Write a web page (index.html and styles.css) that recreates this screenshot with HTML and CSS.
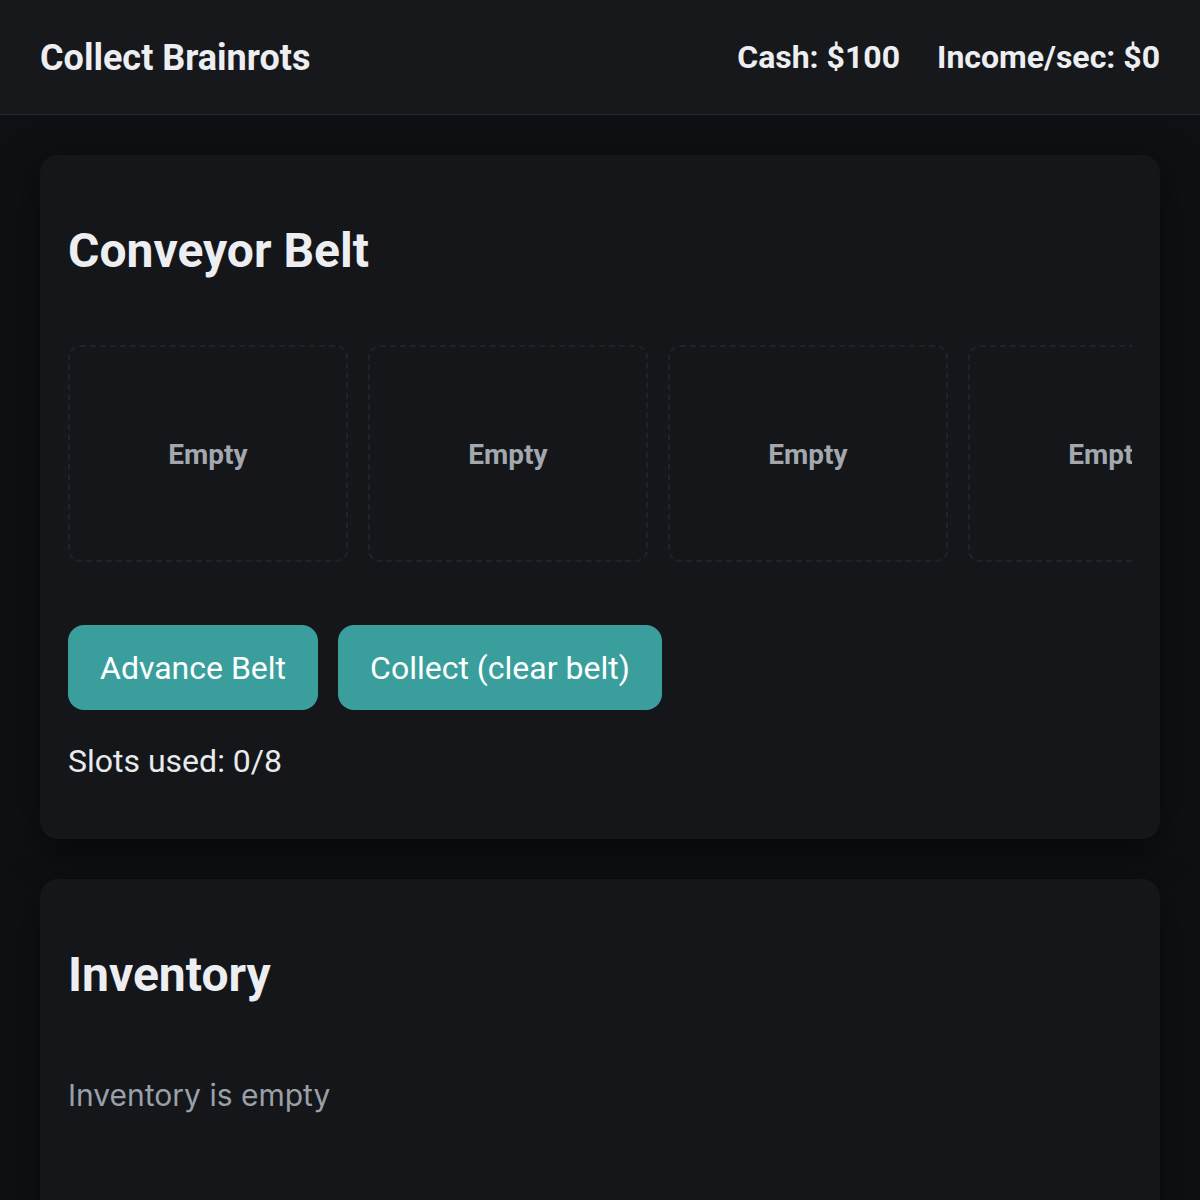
FILE: index.html
```html
<!DOCTYPE html>
<html lang="en">
<head>
<meta charset="utf-8">
<title>Collect Brainrots</title>
<link rel="stylesheet" href="styles.css">
</head>
<body>
<header class="topbar">
  <div class="brand">Collect Brainrots</div>
  <div class="stats">
    <span class="stat">Cash: $100</span>
    <span class="stat">Income/sec: $0</span>
  </div>
</header>
<main class="main">
  <section class="card">
    <h2 class="card-title">Conveyor Belt</h2>
    <div class="belt">
      <div class="slot">Empty</div>
      <div class="slot">Empty</div>
      <div class="slot">Empty</div>
      <div class="slot">Empty</div>
      <div class="slot">Empty</div>
      <div class="slot">Empty</div>
      <div class="slot">Empty</div>
      <div class="slot">Empty</div>
    </div>
    <div class="actions">
      <button class="btn">Advance Belt</button>
      <button class="btn">Collect (clear belt)</button>
    </div>
    <p class="slots-info">Slots used: 0/8</p>
  </section>
  <section class="card">
    <h2 class="card-title">Inventory</h2>
    <p class="muted">Inventory is empty</p>
  </section>
</main>
</body>
</html>
```

FILE: styles.css
```css
html, body {
  margin: 0;
  padding: 0;
}
body {
  background: #0f1014;
  color: #e8eaee;
  font-family: Roboto, "Noto Sans", sans-serif;
}
.topbar {
  display: flex;
  align-items: center;
  justify-content: space-between;
  height: 114px;
  padding: 0 40px;
  background: #17181c;
  border-bottom: 1px solid #25272c;
}
.brand {
  font-size: 36px;
  font-weight: 700;
  color: #eceef1;
  padding-top: 2px;
}
.stats {
  display: flex;
  gap: 37px;
}
.stat {
  font-size: 32px;
  font-weight: 700;
  color: #eceef1;
}
.main {
  display: flex;
  flex-direction: column;
  gap: 40px;
  padding: 40px 40px;
}
.card {
  background: #14161a;
  border-radius: 18px;
  padding: 28px;
  box-shadow: 0 10px 36px rgba(0, 0, 0, 0.55);
}
.card-title {
  margin: 40px 0;
  font-size: 48px;
  line-height: 56px;
  font-weight: 700;
  color: #eceef1;
}
.belt {
  display: flex;
  gap: 20px;
  overflow: hidden;
  margin-top: 66px;
}
.slot {
  flex: 0 0 280px;
  box-sizing: border-box;
  height: 217px;
  padding-top: 2px;
  border: 2px dashed #1f2227;
  border-radius: 12px;
  display: flex;
  align-items: center;
  justify-content: center;
  font-size: 28px;
  font-weight: 700;
  color: #a3a7ae;
}
.actions {
  display: flex;
  gap: 20px;
  margin-top: 63px;
}
.btn {
  height: 85px;
  padding: 0 32px;
  border: none;
  border-radius: 16px;
  background: #3a9f9c;
  color: #ffffff;
  font-family: Roboto, sans-serif;
  font-size: 32px;
  font-weight: 400;
}
.slots-info {
  margin: 32px 0 31px;
  font-size: 32px;
  line-height: 38px;
  color: #e8eaee;
}
.muted {
  margin: 74px 0 120px;
  font-family: Inter, sans-serif;
  font-size: 30px;
  line-height: 36px;
  color: #9aa0a8;
}
```
